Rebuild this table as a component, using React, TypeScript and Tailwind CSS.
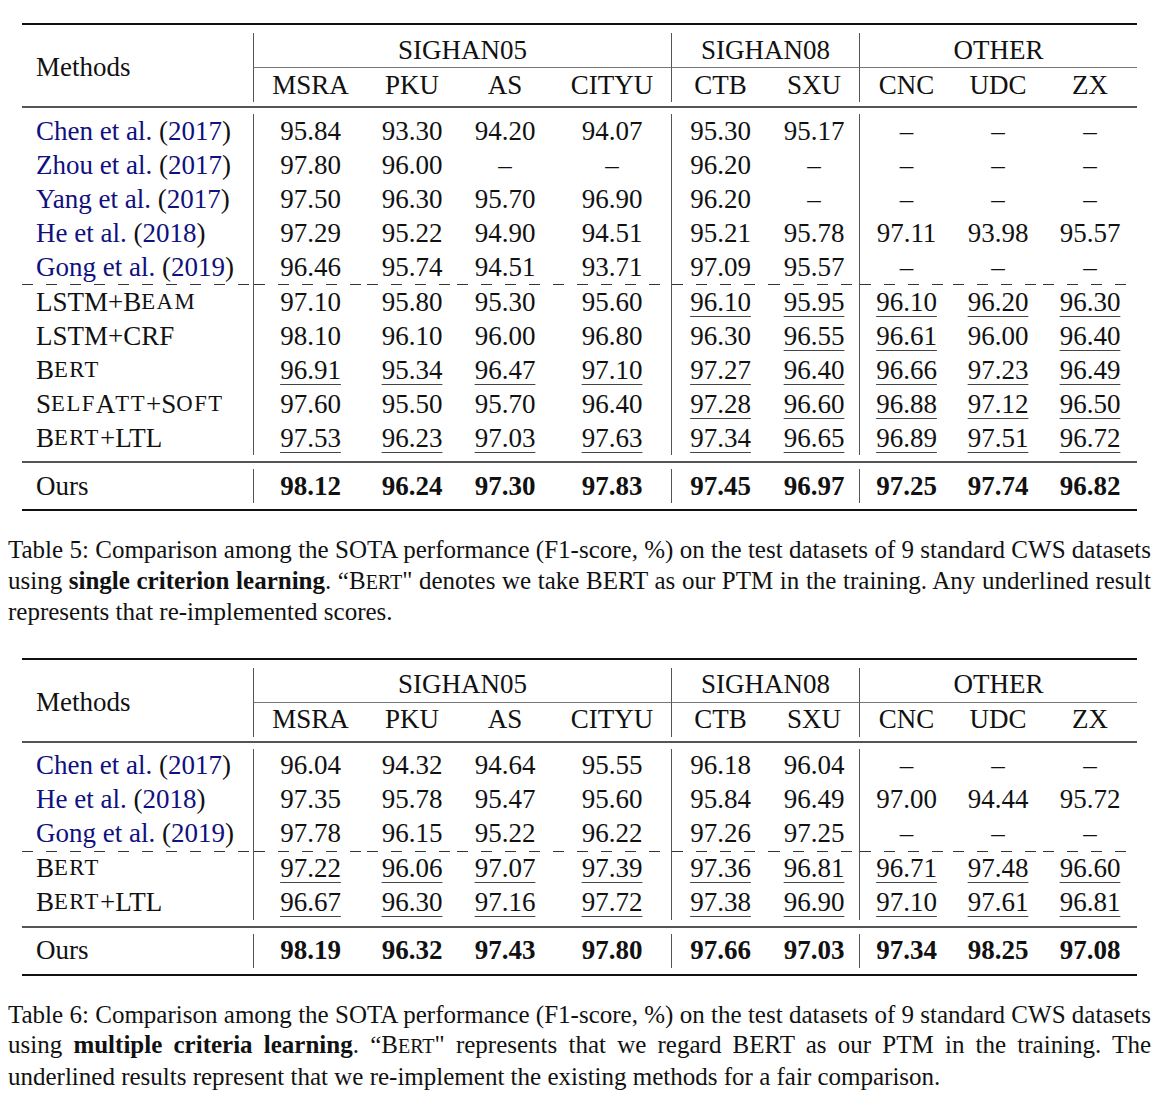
import React from "react"

const GRID = "grid grid-cols-[231px_114px_90px_96px_118px_98px_90px_94px_90px_94px]"
const LINE_COLS = [1, 5, 7]

type Row = { name: React.ReactNode; vals: string[] }

function Cite({ who, year }: { who: string; year: string }) {
    return (
        <span>
            <span className="text-[#10107e]">{who}</span> (<span className="text-[#10107e]">{year}</span>)
        </span>
    )
}

// small caps drawn by hand: capitals at reduced size, like the LaTeX \textsc
function Sc({ children }: { children: React.ReactNode }) {
    return <span className="text-[0.84em] tracking-[1.5px]">{children}</span>
}

const D = "–"

const table5Top: Row[] = [
    { name: <Cite who="Chen et al." year="2017" />, vals: ["95.84", "93.30", "94.20", "94.07", "95.30", "95.17", D, D, D] },
    { name: <Cite who="Zhou et al." year="2017" />, vals: ["97.80", "96.00", D, D, "96.20", D, D, D, D] },
    { name: <Cite who="Yang et al." year="2017" />, vals: ["97.50", "96.30", "95.70", "96.90", "96.20", D, D, D, D] },
    { name: <Cite who="He et al." year="2018" />, vals: ["97.29", "95.22", "94.90", "94.51", "95.21", "95.78", "97.11", "93.98", "95.57"] },
    { name: <Cite who="Gong et al." year="2019" />, vals: ["96.46", "95.74", "94.51", "93.71", "97.09", "95.57", D, D, D] },
]

const table5Bottom: Row[] = [
    { name: <>LSTM+B<Sc>EAM</Sc></>, vals: ["97.10", "95.80", "95.30", "95.60", "_96.10", "_95.95", "_96.10", "_96.20", "_96.30"] },
    { name: "LSTM+CRF", vals: ["98.10", "96.10", "96.00", "96.80", "96.30", "_96.55", "_96.61", "96.00", "_96.40"] },
    { name: <>B<Sc>ERT</Sc></>, vals: ["_96.91", "_95.34", "_96.47", "_97.10", "_97.27", "_96.40", "_96.66", "_97.23", "_96.49"] },
    { name: <>S<Sc>ELF</Sc>A<Sc>TT</Sc>+S<Sc>OFT</Sc></>, vals: ["97.60", "95.50", "95.70", "96.40", "_97.28", "_96.60", "_96.88", "_97.12", "_96.50"] },
    { name: <>B<Sc>ERT</Sc>+LTL</>, vals: ["_97.53", "_96.23", "_97.03", "_97.63", "_97.34", "_96.65", "_96.89", "_97.51", "_96.72"] },
]

const table5Ours = ["98.12", "96.24", "97.30", "97.83", "97.45", "96.97", "97.25", "97.74", "96.82"]

const table6Top: Row[] = [
    { name: <Cite who="Chen et al." year="2017" />, vals: ["96.04", "94.32", "94.64", "95.55", "96.18", "96.04", D, D, D] },
    { name: <Cite who="He et al." year="2018" />, vals: ["97.35", "95.78", "95.47", "95.60", "95.84", "96.49", "97.00", "94.44", "95.72"] },
    { name: <Cite who="Gong et al." year="2019" />, vals: ["97.78", "96.15", "95.22", "96.22", "97.26", "97.25", D, D, D] },
]

const table6Bottom: Row[] = [
    { name: <>B<Sc>ERT</Sc></>, vals: ["_97.22", "_96.06", "_97.07", "_97.39", "_97.36", "_96.81", "_96.71", "_97.48", "_96.60"] },
    { name: <>B<Sc>ERT</Sc>+LTL</>, vals: ["_96.67", "_96.30", "_97.16", "_97.72", "_97.38", "_96.90", "_97.10", "_97.61", "_96.81"] },
]

const table6Ours = ["98.19", "96.32", "97.43", "97.80", "97.66", "97.03", "97.34", "98.25", "97.08"]

function Cell({ v, col, bold }: { v: string; col: number; bold?: boolean }) {
    const under = v.startsWith("_")
    const text = under ? v.slice(1) : v
    return (
        <div className={"h-[34px] flex items-center justify-center " + (LINE_COLS.includes(col) ? "border-l border-[#555]" : "") + (bold ? " font-bold" : "")}>
            <span className={under ? "underline decoration-[#444] decoration-1 underline-offset-[5px]" : ""}>{text}</span>
        </div>
    )
}

function BodyRow({ row, bold }: { row: Row; bold?: boolean }) {
    return (
        <>
            <div className="h-[34px] flex items-center pl-[14px] whitespace-nowrap">{row.name}</div>
            {row.vals.map((v, i) => (
                <Cell key={i} v={v} col={i + 1} bold={bold} />
            ))}
        </>
    )
}

function Dashed() {
    return (
        <>
            {Array.from({ length: 10 }).map((_, i) => (
                <div
                    key={i}
                    className={"h-px bg-[repeating-linear-gradient(90deg,#333_0_11px,transparent_11px_24px)] " + (LINE_COLS.includes(i) ? "border-l border-[#555]" : "")}
                />
            ))}
        </>
    )
}

function Header() {
    const subs = ["MSRA", "PKU", "AS", "CITYU", "CTB", "SXU", "CNC", "UDC", "ZX"]
    return (
        <div className={GRID + " pt-[8px] pb-[4px]"}>
            <div className="row-span-2 flex items-center pl-[14px]">Methods</div>
            <div className="col-span-4 h-[35px] flex items-center justify-center border-l border-b border-[#555] border-b-[#777]">SIGHAN05</div>
            <div className="col-span-2 h-[35px] flex items-center justify-center border-l border-b border-[#555] border-b-[#777]">SIGHAN08</div>
            <div className="col-span-3 h-[35px] flex items-center justify-center border-l border-b border-[#555] border-b-[#777]">OTHER</div>
            {subs.map((s, i) => (
                <div key={s} className={"h-[34px] flex items-center justify-center " + (LINE_COLS.includes(i + 1) ? "border-l border-[#555]" : "")}>
                    {s}
                </div>
            ))}
        </div>
    )
}

function ResultTable({ top, bottom, ours }: { top: Row[]; bottom: Row[]; ours: string[] }) {
    return (
        <div className="mx-[22px] text-[27px] text-[#111] font-['Liberation_Serif',serif]">
            <div className="h-[2px] bg-[#111]" />
            <Header />
            <div className="h-[2px] bg-[#555]" />
            <div className={GRID + " py-[6px]"}>
                {top.map((r, i) => <BodyRow key={i} row={r} />)}
                <Dashed />
                {bottom.map((r, i) => <BodyRow key={i} row={r} />)}
            </div>
            <div className="h-[2px] bg-[#555]" />
            <div className={GRID + " py-[6px]"}>
                <BodyRow row={{ name: "Ours", vals: ours }} bold />
            </div>
            <div className="h-[2px] bg-[#111]" />
        </div>
    )
}

function Caption({ lines }: { lines: React.ReactNode[] }) {
    return (
        <div className="mx-[8px] text-[25px] leading-[30.5px] text-[#111] font-['Liberation_Serif',serif]">
            {lines.map((l, i) => (
                <div key={i} className={i < lines.length - 1 ? "text-justify [text-align-last:justify] whitespace-nowrap" : "whitespace-nowrap"}>
                    {l}
                </div>
            ))}
        </div>
    )
}

export default function App() {
    return (
        <div className="w-[1159px] h-[1098px] bg-white pt-[23px]">
            <ResultTable top={table5Top} bottom={table5Bottom} ours={table5Ours} />
            <div className="mt-[24px]">
                <Caption
                    lines={[
                        "Table 5: Comparison among the SOTA performance (F1-score, %) on the test datasets of 9 standard CWS datasets",
                        <>using <b>single criterion learning</b>. “B<span className="text-[0.8em]">ERT</span>" denotes we take BERT as our PTM in the training. Any underlined result</>,
                        "represents that re-implemented scores.",
                    ]}
                />
            </div>
            <div className="mt-[30px]">
                <ResultTable top={table6Top} bottom={table6Bottom} ours={table6Ours} />
            </div>
            <div className="mt-[24px]">
                <Caption
                    lines={[
                        "Table 6: Comparison among the SOTA performance (F1-score, %) on the test datasets of 9 standard CWS datasets",
                        <>using <b>multiple criteria learning</b>.  “B<span className="text-[0.8em]">ERT</span>" represents that we regard BERT as our PTM in the training.  The</>,
                        "underlined results represent that we re-implement the existing methods for a fair comparison.",
                    ]}
                />
            </div>
        </div>
    )
}
